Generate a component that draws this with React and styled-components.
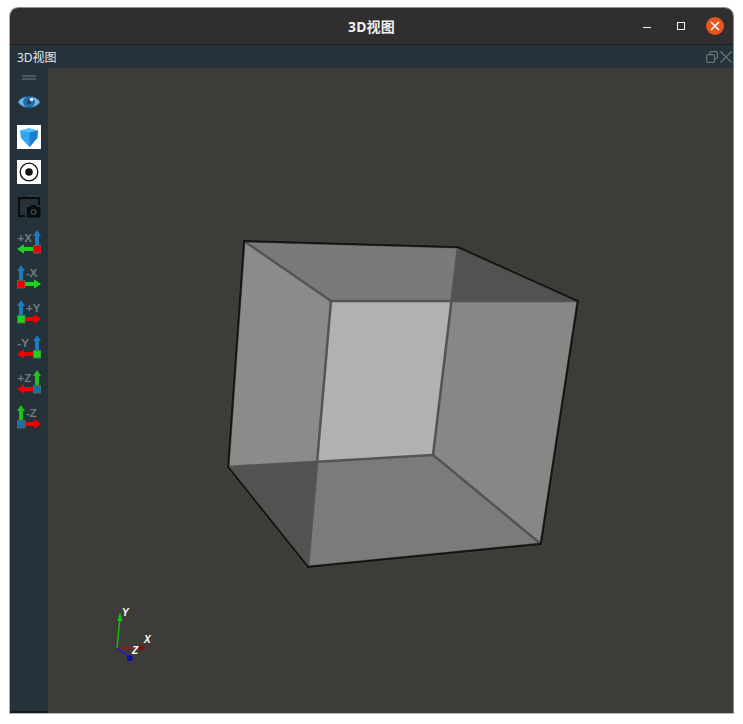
import styled, { createGlobalStyle } from "styled-components";

const GlobalStyle = createGlobalStyle`
  html, body {
    margin: 0;
    padding: 0;
    background: #ffffff;
    font-family: "Noto Sans", "Noto Sans CJK SC", sans-serif;
  }
`;

const Win = styled.div`
  width: 725px;
  height: 707px;
  margin: 7px 0 0 9px;
  display: flex;
  flex-direction: column;
  border: 1px solid #a9adaf;
  border-right-color: #7f8c93;
  border-bottom-color: #b5b5b5;
  border-top-color: #8d8d8d;
  border-radius: 9px 9px 0 0;
  overflow: hidden;
  box-sizing: border-box;
`;

const TitleBar = styled.header`
  height: 36px;
  flex: none;
  display: grid;
  grid-template-columns: 1fr auto 1fr;
  align-items: center;
  background: #302e2e;
  border-bottom: 1px solid #1e1e1e;
`;

const Title = styled.div`
  grid-column: 2;
  color: #f0f0f0;
  font-size: 14px;
  font-weight: 700;
  letter-spacing: 0.2px;
  margin-top: -1px;
`;

const WinControls = styled.div`
  grid-column: 3;
  justify-self: end;
  display: flex;
  align-items: center;
  padding-right: 9px;
`;

const MinBtn = styled.span`
  width: 8px;
  height: 1px;
  margin: 3px 26px 0 0;
  background: #f2f2f2;
`;

const MaxBtn = styled.span`
  width: 6px;
  height: 6px;
  margin-right: 21px;
  border: 1px solid #f2f2f2;
`;

const CloseBtn = styled.span`
  width: 18px;
  height: 18px;
  border-radius: 50%;
  background: #e95420;
  display: flex;
  align-items: center;
  justify-content: center;
`;

const DockBar = styled.div`
  height: 23px;
  flex: none;
  display: flex;
  align-items: center;
  justify-content: space-between;
  padding: 0 1px 0 7px;
  background: #25323a;
  color: #e6e9ea;
  font-size: 12px;
`;

const DockButtons = styled.div`
  display: flex;
  align-items: center;
  gap: 2px;
`;

const Main = styled.div`
  flex: 1;
  min-height: 0;
  display: flex;
`;

const ToolBar = styled.nav`
  width: 38px;
  flex: none;
  box-sizing: border-box;
  display: flex;
  flex-direction: column;
  align-items: center;
  padding-top: 7px;
  background: #25323a;
  border-bottom: 2px solid #141c20;
`;

const Handle = styled.div`
  width: 14px;
  height: 5px;
  border-top: 2px solid #4e5a61;
  border-bottom: 2px solid #4e5a61;
  box-sizing: border-box;
  margin-bottom: 10px;
`;

const ToolList = styled.div`
  display: flex;
  flex-direction: column;
  gap: 11px;
`;

const ToolIcon = styled.div`
  width: 24px;
  height: 24px;
  background: ${(p) => (p.$white ? "#ffffff" : "transparent")};
  svg {
    display: block;
  }
`;

const Viewport = styled.main`
  flex: 1;
  min-width: 0;
  background: #3d3c38;
  svg {
    display: block;
  }
`;

function EyeIcon() {
  return (
    <ToolIcon>
      <svg width="24" height="24" viewBox="0 0 24 24">
        <path d="M0.7 12 C5 4.2 19 4.2 23.3 12 C19 19.8 5 19.8 0.7 12 Z" fill="#72b4e6" stroke="#1c4a70" strokeWidth="0.9" />
        <circle cx="12" cy="12" r="5.4" fill="#1f73ba" stroke="#1a4f7c" strokeWidth="0.7" />
        <circle cx="12" cy="12" r="2.4" fill="#27445c" />
        <circle cx="14.6" cy="9.5" r="1.8" fill="#f2f9fd" />
      </svg>
    </ToolIcon>
  );
}

function CubeIcon() {
  return (
    <ToolIcon $white>
      <svg width="24" height="24" viewBox="0 0 24 24">
        <path d="M3 5.5 L12 3.2 L21 5.5 L20.3 13 L12.5 22 L4 13 Z" fill="#33a6f2" />
        <path d="M3 5.5 L12 7.5 L21 5.5 L12 3.2 Z" fill="#5cc0fa" />
        <path d="M12.5 7.4 L21 5.5 L20.3 13 L12.5 22 Z" fill="#1a7fd2" />
      </svg>
    </ToolIcon>
  );
}

function TargetIcon() {
  return (
    <ToolIcon $white>
      <svg width="24" height="24" viewBox="0 0 24 24">
        <circle cx="12" cy="12" r="8.8" fill="none" stroke="#111" strokeWidth="1.3" />
        <circle cx="12" cy="12" r="3.8" fill="#111" />
      </svg>
    </ToolIcon>
  );
}

function ShotIcon() {
  return (
    <ToolIcon>
      <svg width="24" height="24" viewBox="0 0 24 24">
        <path d="M2 22 V3 H22 V10" fill="none" stroke="#0b0b0b" strokeWidth="2" />
        <path d="M12 1 H22" stroke="#3a4850" strokeWidth="1" />
        <path d="M2 21 H8" stroke="#0b0b0b" strokeWidth="2" />
        <path d="M10 12 H13 L14.5 10 H18.5 L20 12 H23.5 V22.5 H10 Z" fill="#0b0b0b" />
        <circle cx="16.5" cy="17" r="3" fill="#3a4850" />
        <circle cx="16.5" cy="17" r="1.7" fill="#0b0b0b" />
      </svg>
    </ToolIcon>
  );
}

const AXIS = { r: "#f00000", g: "#1fd01f", b: "#1a6ea6" };
const AXIS_UP = { r: "#e01010", g: "#1fc01f", b: "#2079b8" };

function AxisIcon({ label, square, up, side, flip }) {
  const sx = flip ? 0 : 16;
  const ux = sx + 4;
  const arrow = flip
    ? "M8 16.9 H17 V14.2 L24 19 L17 23.8 V21.1 H8 Z"
    : "M16 16.9 H7 V14.2 L0 19 L7 23.8 V21.1 H16 Z";
  return (
    <ToolIcon>
      <svg width="24" height="24" viewBox="0 0 24 24">
        <text x={flip ? 9 : 0.5} y="11.5" fontSize="11.5" fontWeight="700" fontFamily="'Liberation Sans', sans-serif" fill="#717c82">
          {label}
        </text>
        <path d={`M${ux - 2} 15 V6 H${ux - 4} L${ux} 0 L${ux + 4} 6 H${ux + 2} V15 Z`} fill={AXIS_UP[up]} />
        <path d={arrow} fill={AXIS[side]} />
        <rect x={sx + 0.4} y="15.4" width="7.6" height="7.6" fill={AXIS[square]} stroke="#6a6a5c" strokeWidth="0.8" />
      </svg>
    </ToolIcon>
  );
}

const P = {
  a: [244, 241],
  b: [458, 247],
  c: [578, 301],
  d: [541, 544],
  e: [308, 567],
  f: [228, 467],
  g: [331, 301],
  h: [451, 301],
  i: [433, 455],
  j: [317, 462],
};

const pts = (...keys) => keys.map((k) => P[k].join(",")).join(" ");

const FACES = [
  { k: ["a", "b", "h", "g"], fill: "#7a7a79" },
  { k: ["b", "c", "h"], fill: "#525250" },
  { k: ["a", "g", "j", "f"], fill: "#8b8b8a" },
  { k: ["h", "c", "d", "i"], fill: "#878786" },
  { k: ["f", "j", "e"], fill: "#525250" },
  { k: ["j", "i", "d", "e"], fill: "#7b7b7a" },
  { k: ["g", "h", "i", "j"], fill: "#b1b1af" },
];

const INNER_EDGES = [
  ["a", "g"],
  ["g", "c"],
  ["b", "i"],
  ["f", "i"],
  ["i", "d"],
  ["g", "e"],
];

const OUTER_EDGES = [
  ["a", "b"],
  ["b", "c"],
  ["c", "d"],
  ["d", "e"],
  ["e", "f"],
  ["f", "a"],
];

function Line({ from, to, color, width }) {
  return <line x1={P[from][0]} y1={P[from][1]} x2={P[to][0]} y2={P[to][1]} stroke={color} strokeWidth={width} strokeLinecap="round" />;
}

const AxisLabel = styled.text`
  fill: #ffffff;
  font-family: "Liberation Sans", sans-serif;
  font-size: 10px;
  font-weight: 700;
  font-style: italic;
`;

function Scene() {
  return (
    <svg width="684" height="645" viewBox="48 68 684 645">
      {FACES.map((f) => (
        <polygon key={f.k.join("")} points={pts(...f.k)} fill={f.fill} />
      ))}
      {INNER_EDGES.map(([a, b]) => (
        <Line key={a + b} from={a} to={b} color="#545453" width="2.5" />
      ))}
      {OUTER_EDGES.map(([a, b]) => (
        <Line key={"band" + a + b} from={a} to={b} color="#4c4c4b" width="3" />
      ))}
      {OUTER_EDGES.map(([a, b]) => (
        <Line key={a + b} from={a} to={b} color="#141413" width="2" />
      ))}

      <line x1="117" y1="648" x2="120" y2="618" stroke="#12c812" strokeWidth="1.3" />
      <path d="M120 612 L122.5 621 L117.5 621 Z" fill="#12c812" />
      <line x1="117" y1="648" x2="140" y2="648" stroke="#b01414" strokeWidth="1.3" />
      <path d="M147 648 L139 645 L139 651 Z" fill="#7a1010" />
      <line x1="117" y1="648" x2="128" y2="656" stroke="#1818e0" strokeWidth="1.3" />
      <path d="M127 656 L131 655 L133 658 L132 661 L127 661 Z" fill="#0c0ca8" />
      <AxisLabel x="122" y="616">Y</AxisLabel>
      <AxisLabel x="144" y="643">X</AxisLabel>
      <AxisLabel x="132" y="654">Z</AxisLabel>
    </svg>
  );
}

export default function App() {
  return (
    <>
      <GlobalStyle />
      <Win>
        <TitleBar>
          <Title>3D视图</Title>
          <WinControls>
            <MinBtn />
            <MaxBtn />
            <CloseBtn>
              <svg width="10" height="10" viewBox="0 0 10 10">
                <path d="M1 1 L9 9 M9 1 L1 9" stroke="#fff" strokeWidth="1.6" />
              </svg>
            </CloseBtn>
          </WinControls>
        </TitleBar>
        <DockBar>
          <span>3D视图</span>
          <DockButtons>
            <svg width="12" height="12" viewBox="0 0 12 12">
              <path d="M4 3 V1.5 Q4 0.6 4.8 0.6 H10.4 Q11.4 0.6 11.4 1.5 V6.5 Q11.4 7.6 10.4 7.6 H8.5" fill="none" stroke="#69757b" strokeWidth="1.2" />
              <rect x="0.7" y="3.6" width="7.8" height="7.8" rx="1" fill="none" stroke="#69757b" strokeWidth="1.2" />
            </svg>
            <svg width="12" height="12" viewBox="0 0 12 12">
              <path d="M0.5 0.5 L11.5 11.5 M11.5 0.5 L0.5 11.5" stroke="#69757b" strokeWidth="1.3" />
            </svg>
          </DockButtons>
        </DockBar>
        <Main>
          <ToolBar>
            <Handle />
            <ToolList>
              <EyeIcon />
              <CubeIcon />
              <TargetIcon />
              <ShotIcon />
              <AxisIcon label="+X" square="r" up="b" side="g" />
              <AxisIcon label="-X" square="r" up="b" side="g" flip />
              <AxisIcon label="+Y" square="g" up="b" side="r" flip />
              <AxisIcon label="-Y" square="g" up="b" side="r" />
              <AxisIcon label="+Z" square="b" up="g" side="r" />
              <AxisIcon label="-Z" square="b" up="g" side="r" flip />
            </ToolList>
          </ToolBar>
          <Viewport>
            <Scene />
          </Viewport>
        </Main>
      </Win>
    </>
  );
}
